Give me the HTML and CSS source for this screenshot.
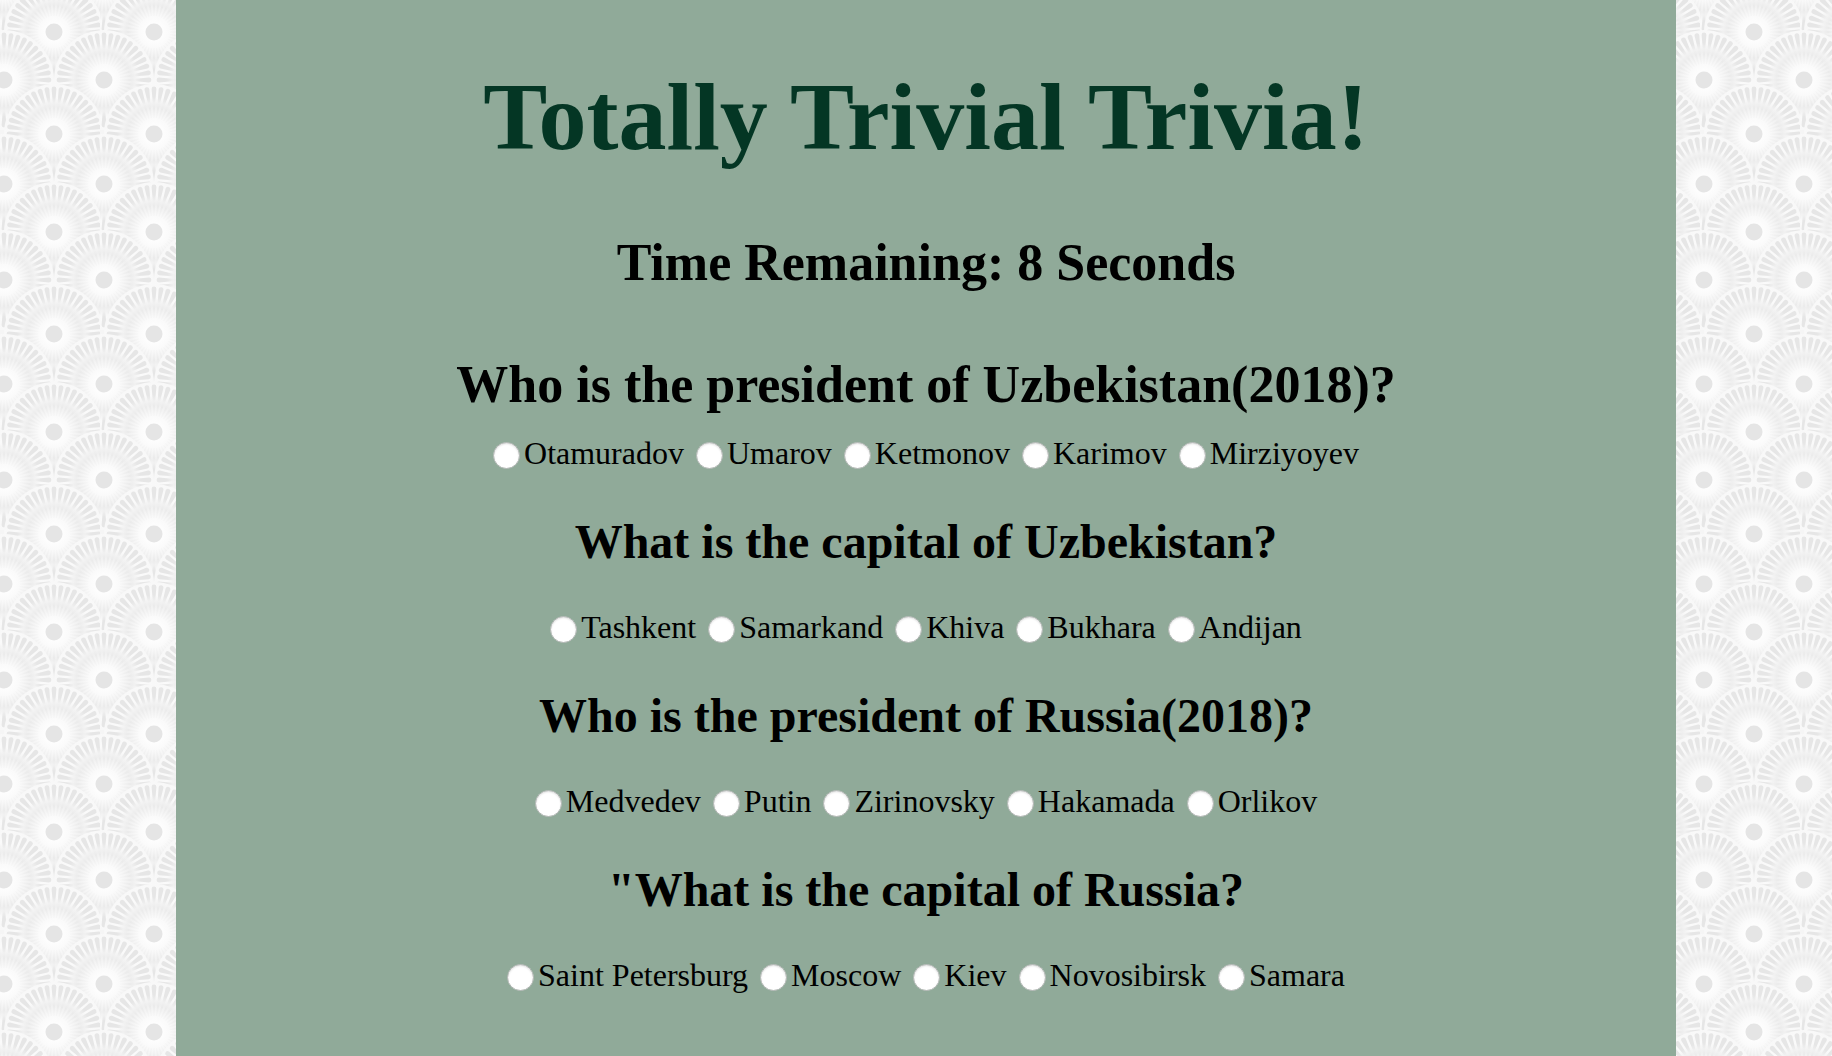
FILE: index.html
```html
<!DOCTYPE html>
<html lang="en">
<head>
<meta charset="utf-8">
<title>Totally Trivial Trivia!</title>
<link rel="stylesheet" href="styles.css">
</head>
<body>
<svg class="backdrop" aria-hidden="true">
  <defs>
    <radialGradient id="glow">
      <stop offset="0.15" stop-color="#fefefe"/>
      <stop offset="0.32" stop-color="#fafafa"/>
      <stop offset="0.56" stop-color="#efefef"/>
      <stop offset="0.74" stop-color="#fafafa"/>
      <stop offset="1" stop-color="#f8f8f8"/>
    </radialGradient>
    <radialGradient id="ray" gradientUnits="userSpaceOnUse" cx="0" cy="0" r="50">
      <stop offset="0.3" stop-color="#f8f8f8"/>
      <stop offset="0.52" stop-color="#ebebeb"/>
      <stop offset="0.62" stop-color="#f1f1f1"/>
      <stop offset="0.74" stop-color="#e6e6e6"/>
      <stop offset="1" stop-color="#e6e6e6"/>
    </radialGradient>
    <path id="spoke" d="M-.5-16-1.3-32-2.4-45A2.4 2.4 0 0 1 2.4-45L1.3-32 .5-16Z" fill="url(#ray)"/>
    <g id="spokes">
      <use href="#spoke"/>
      <use href="#spoke" transform="rotate(9)"/>
      <use href="#spoke" transform="rotate(18)"/>
      <use href="#spoke" transform="rotate(27)"/>
      <use href="#spoke" transform="rotate(36)"/>
    </g>
    <g id="fan">
      <circle r="50" fill="url(#glow)"/>
      <use href="#spokes"/>
      <use href="#spokes" transform="rotate(45)"/>
      <use href="#spokes" transform="rotate(90)"/>
      <use href="#spokes" transform="rotate(135)"/>
      <use href="#spokes" transform="rotate(180)"/>
      <use href="#spokes" transform="rotate(225)"/>
      <use href="#spokes" transform="rotate(270)"/>
      <use href="#spokes" transform="rotate(315)"/>
      <circle r="8.5" fill="#e5e5e5"/>
    </g>
    <pattern id="fans" width="100" height="200" patternUnits="userSpaceOnUse">
      <use href="#fan" x="4" y="-16"/><use href="#fan" x="104" y="-16"/>
      <use href="#fan" x="54" y="32"/>
      <use href="#fan" x="4" y="80"/><use href="#fan" x="104" y="80"/>
      <use href="#fan" x="54" y="134"/>
      <use href="#fan" x="4" y="184"/><use href="#fan" x="104" y="184"/>
      <use href="#fan" x="54" y="232"/>
    </pattern>
  </defs>
  <rect width="100%" height="100%" fill="url(#fans)"/>
</svg>
<main class="quiz">
  <h1 class="title">Totally Trivial Trivia!</h1>
  <h2 class="timer">Time Remaining: 8 Seconds</h2>
  <form>
    <fieldset class="question lead">
      <legend>Who is the president of Uzbekistan(2018)?</legend>
      <div class="options">
        <label><input type="radio" name="q1">Otamuradov</label>
        <label><input type="radio" name="q1">Umarov</label>
        <label><input type="radio" name="q1">Ketmonov</label>
        <label><input type="radio" name="q1">Karimov</label>
        <label><input type="radio" name="q1">Mirziyoyev</label>
      </div>
    </fieldset>
    <fieldset class="question">
      <legend>What is the capital of Uzbekistan?</legend>
      <div class="options">
        <label><input type="radio" name="q2">Tashkent</label>
        <label><input type="radio" name="q2">Samarkand</label>
        <label><input type="radio" name="q2">Khiva</label>
        <label><input type="radio" name="q2">Bukhara</label>
        <label><input type="radio" name="q2">Andijan</label>
      </div>
    </fieldset>
    <fieldset class="question">
      <legend>Who is the president of Russia(2018)?</legend>
      <div class="options">
        <label><input type="radio" name="q3">Medvedev</label>
        <label><input type="radio" name="q3">Putin</label>
        <label><input type="radio" name="q3">Zirinovsky</label>
        <label><input type="radio" name="q3">Hakamada</label>
        <label><input type="radio" name="q3">Orlikov</label>
      </div>
    </fieldset>
    <fieldset class="question">
      <legend>"What is the capital of Russia?</legend>
      <div class="options">
        <label><input type="radio" name="q4">Saint Petersburg</label>
        <label><input type="radio" name="q4">Moscow</label>
        <label><input type="radio" name="q4">Kiev</label>
        <label><input type="radio" name="q4">Novosibirsk</label>
        <label><input type="radio" name="q4">Samara</label>
      </div>
    </fieldset>
  </form>
</main>
</body>
</html>
```
FILE: styles.css
```css
* { box-sizing: border-box; }
body {
  margin: 0;
  background: #f5f5f5;
  color: #000;
  font-family: "Liberation Serif", "Times New Roman", serif;
}
.backdrop {
  position: fixed;
  inset: 0;
  z-index: -1;
  width: 100%;
  height: 100%;
}
.quiz {
  max-width: 1500px;
  min-height: 100vh;
  margin: 0 156px 0 176px;
  padding: 60px 20px;
  background: #90aa99;
  text-align: center;
}
.title {
  margin: 0;
  color: #043624;
  font-size: 96px;
  line-height: 114px;
}
.timer {
  margin: 58px 0 60px;
  font-size: 52px;
  line-height: 62px;
}
.question {
  min-width: 0;
  margin: 0 0 42px;
  padding: 0;
  border: 0;
}
.question legend {
  width: 100%;
  padding: 0;
  font-size: 48px;
  font-weight: bold;
  line-height: 58px;
}
.options {
  display: flex;
  flex-wrap: wrap;
  justify-content: center;
  column-gap: 12px;
  padding-top: 38px;
  font-size: 32px;
  line-height: 36px;
}
.lead legend { font-size: 52px; line-height: 62px; }
.lead .options { padding-top: 19px; }
.options label {
  display: flex;
  align-items: center;
  gap: 4px;
}
.options input {
  appearance: none;
  width: 27px;
  height: 27px;
  margin: 4px 0 0;
  border: 1px solid #b0b5b2;
  border-radius: 50%;
  background: #fff;
  box-shadow: inset 0 1px 2px #ddd;
}
.options input:checked { box-shadow: inset 0 0 0 8px #3b82f6; }
```
